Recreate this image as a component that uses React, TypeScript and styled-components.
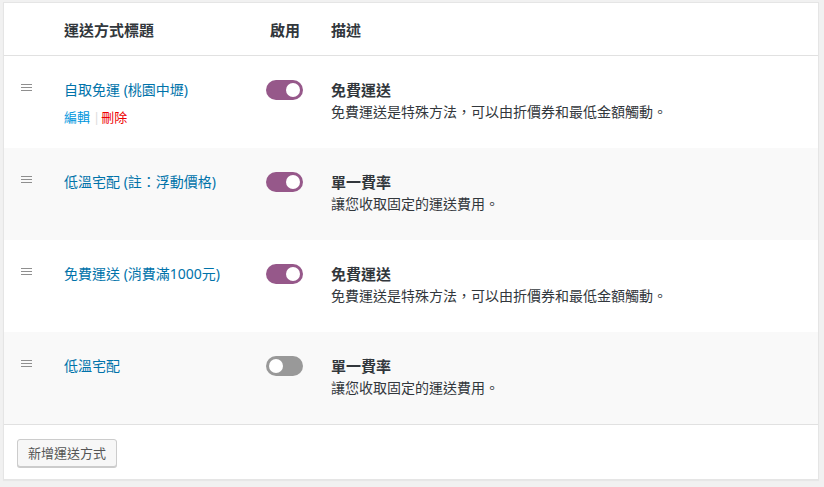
import React from "react";
import styled, { createGlobalStyle } from "styled-components";

const Global = createGlobalStyle`
  html, body { margin: 0; padding: 0; background: #f1f1f1; }
  body {
    font-family: "Noto Sans", "Noto Sans CJK TC", sans-serif;
    font-size: 14px;
    color: #444;
  }
`;

const Page = styled.div`
  padding: 2px 5px 7px 3px;
`;

const Panel = styled.div`
  background: #fff;
  border: 1px solid #e5e5e5;
  box-shadow: 0 1px 1px rgba(0, 0, 0, 0.04);
`;

const Grid = styled.div`
  display: grid;
  grid-template-columns: 60px 202px 65px 1fr;
  align-items: start;
`;

const HeaderRow = styled(Grid)`
  height: 52px;
  align-items: center;
  border-bottom: 1px solid #e1e1e1;
`;

const HeadCell = styled.div<{ $inset?: number }>`
  font-weight: 700;
  font-size: 15px;
  color: #32373c;
  line-height: 20px;
  padding-top: 2px;
  padding-left: ${(p) => p.$inset ?? 0}px;
`;

const Row = styled(Grid)<{ $alt?: boolean }>`
  height: 92px;
  box-sizing: border-box;
  padding-top: 24px;
  background: ${(p) => (p.$alt ? "#f9f9f9" : "#fff")};
`;

const Handle = styled.div`
  padding-left: 17px;
  padding-top: 4px;
  display: flex;
  flex-direction: column;
  gap: 2px;
  & > span {
    display: block;
    width: 11px;
    height: 1px;
    background: #8f8f8f;
  }
`;

const TitleCell = styled.div`
  display: flex;
  flex-direction: column;
  gap: 8px;
`;

const TitleLink = styled.a`
  color: #0073aa;
  text-decoration: none;
  font-size: 14px;
  line-height: 20px;
`;

const Actions = styled.div`
  display: flex;
  align-items: center;
  font-size: 13px;
  line-height: 18px;
`;

const ActionLink = styled.a<{ $danger?: boolean }>`
  color: ${(p) => (p.$danger ? "#e00" : "#0096dd")};
  text-decoration: none;
`;

const Sep = styled.span`
  color: #ddd;
  margin: 0 1px 0 3px;
`;

const Toggle = styled.span<{ $on: boolean }>`
  display: inline-block;
  position: relative;
  width: 37px;
  height: 20px;
  border-radius: 10px;
  background: ${(p) => (p.$on ? "#96588a" : "#999")};
  &::after {
    content: "";
    position: absolute;
    top: 3px;
    left: ${(p) => (p.$on ? "20px" : "3px")};
    width: 14px;
    height: 14px;
    border-radius: 50%;
    background: #fff;
  }
`;

const Desc = styled.div`
  display: flex;
  flex-direction: column;
`;

const DescTitle = styled.strong`
  font-weight: 700;
  color: #32373c;
  font-size: 15px;
  line-height: 20px;
`;

const DescText = styled.span`
  color: #32373c;
  font-size: 14px;
  line-height: 23px;
`;

const Footer = styled.div`
  border-top: 1px solid #e1e1e1;
  padding: 14px 13px 12px 13px;
`;

const Button = styled.button`
  font-family: inherit;
  font-size: 13px;
  color: #555;
  background: #f7f7f7;
  border: 1px solid #ccc;
  border-radius: 3px;
  box-shadow: 0 1px 0 #ccc;
  height: 28px;
  padding: 0 10px;
  line-height: 26px;
  cursor: pointer;
`;

type Method = {
  title: string;
  on: boolean;
  descTitle: string;
  desc: string;
  actions?: boolean;
};

const FREE = "免費運送是特殊方法，可以由折價券和最低金額觸動。";
const FLAT = "讓您收取固定的運送費用。";

const methods: Method[] = [
  { title: "自取免運 (桃園中壢)", on: true, descTitle: "免費運送", desc: FREE, actions: true },
  { title: "低溫宅配 (註：浮動價格)", on: true, descTitle: "單一費率", desc: FLAT },
  { title: "免費運送 (消費滿1000元)", on: true, descTitle: "免費運送", desc: FREE },
  { title: "低溫宅配", on: false, descTitle: "單一費率", desc: FLAT },
];

export default function App() {
  return (
    <Page>
      <Global />
      <Panel>
        <HeaderRow>
          <div />
          <HeadCell>運送方式標題</HeadCell>
          <HeadCell $inset={4}>啟用</HeadCell>
          <HeadCell>描述</HeadCell>
        </HeaderRow>
        {methods.map((m, i) => (
          <Row key={i} $alt={i % 2 === 1}>
            <Handle>
              <span />
              <span />
              <span />
            </Handle>
            <TitleCell>
              <TitleLink href="#">{m.title}</TitleLink>
              {m.actions && (
                <Actions>
                  <ActionLink href="#">編輯</ActionLink>
                  <Sep>|</Sep>
                  <ActionLink href="#" $danger>刪除</ActionLink>
                </Actions>
              )}
            </TitleCell>
            <div>
              <Toggle $on={m.on} />
            </div>
            <Desc>
              <DescTitle>{m.descTitle}</DescTitle>
              <DescText>{m.desc}</DescText>
            </Desc>
          </Row>
        ))}
        <Footer>
          <Button>新增運送方式</Button>
        </Footer>
      </Panel>
    </Page>
  );
}
